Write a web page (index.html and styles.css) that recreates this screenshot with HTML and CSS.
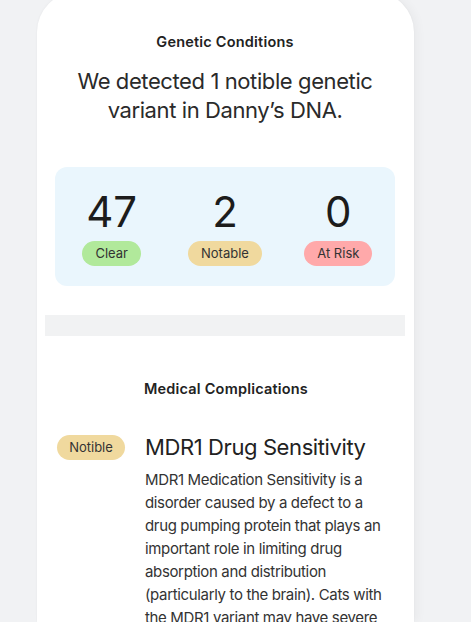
FILE: index.html
```html
<!DOCTYPE html>
<html lang="en">
<head>
    <meta charset="UTF-8">
    <meta name="viewport" content="width=device-width, initial-scale=1.0">
    <title>Genetic Conditions - Danny</title>
    <link rel="stylesheet" href="styles.css">
</head>
<body>
    <div class="card">
        <section class="summary">
            <h2 class="section-title">Genetic Conditions</h2>
            <p class="headline">We detected 1 notible genetic variant in Danny’s DNA.</p>

            <div class="stats">
                <div class="stat">
                    <span class="stat-num">47</span>
                    <span class="pill pill-clear">Clear</span>
                </div>
                <div class="stat">
                    <span class="stat-num">2</span>
                    <span class="pill pill-notable">Notable</span>
                </div>
                <div class="stat">
                    <span class="stat-num">0</span>
                    <span class="pill pill-risk">At Risk</span>
                </div>
            </div>
        </section>

        <div class="divider"></div>

        <section class="complications">
            <h2 class="section-title">Medical Complications</h2>

            <div class="condition">
                <div class="condition-tag">
                    <span class="pill pill-notable pill-tag">Notible</span>
                </div>
                <div class="condition-body">
                    <h3 class="condition-name">MDR1 Drug Sensitivity</h3>
                    <p class="condition-text">MDR1 Medication Sensitivity is a disorder caused by a defect to a drug pumping protein that plays an important role in limiting drug absorption and distribution (particularly to the brain). Cats with the MDR1 variant may have severe</p>
                </div>
            </div>
        </section>
    </div>
    <div class="bottom-strip"></div>
</body>
</html>
```

FILE: styles.css
```css
html, body {
    height: 632px;
}

body {
    font-family: Inter, "Liberation Sans", sans-serif;
    background-color: #f1f2f4;
    color: #222;
    margin: 0;
    padding: 0;
    overflow: hidden;
    display: flex;
    flex-direction: column;
}

.card {
    flex: 0 0 630px;
    margin-top: -8px;
    margin-left: 37px;
    width: 377px;
    background-color: #fff;
    border-radius: 40px 40px 0 0;
    box-shadow: 4px 0 10px rgba(0, 0, 0, 0.035), 0 0 2px rgba(0, 0, 0, 0.05);
    overflow: hidden;
}

.bottom-strip {
    flex: 0 0 10px;
    background-color: #fff;
    position: relative;
    z-index: 1;
}

.summary {
    padding: 40px 19px 0 18px;
}

.section-title {
    margin: 0;
    font-size: 14.5px;
    line-height: 20px;
    font-weight: 600;
    letter-spacing: 0.2px;
    text-align: center;
    color: #222;
}

.headline {
    margin: 15px 0 0;
    font-size: 22px;
    line-height: 29px;
    font-weight: 400;
    letter-spacing: -0.4px;
    text-align: center;
    color: #2a2a2a;
}

.stats {
    margin-top: 42px;
    background-color: #eaf6fd;
    border-radius: 12px;
    padding: 21px 0 20px;
    display: grid;
    grid-template-columns: repeat(3, 1fr);
}

.stat {
    display: flex;
    flex-direction: column;
    align-items: center;
    gap: 5px;
}

.stat-num {
    font-size: 42px;
    line-height: 48px;
    font-weight: 400;
    color: #1c1c1c;
}

.pill {
    display: inline-block;
    height: 25px;
    line-height: 25px;
    padding: 0 13px;
    border-radius: 13px;
    font-size: 13px;
    color: #333;
}

.pill-clear {
    background-color: #b1e99b;
}

.pill-notable {
    background-color: #f0d99e;
}

.pill-risk {
    background-color: #ffa9aa;
}

.divider {
    height: 21px;
    margin: 29px 9px 0 8px;
    background-color: #f1f2f3;
}

.complications {
    padding: 43px 19px 0 20px;
}

.condition {
    margin-top: 34px;
    display: flex;
    gap: 20px;
}

.condition-tag {
    flex: 0 0 68px;
    padding-top: 2px;
}

.pill-tag {
    width: 68px;
    padding: 0;
    text-align: center;
}

.condition-body {
    flex: 1;
    padding-right: 6px;
}

.condition-name {
    margin: 0;
    font-size: 22px;
    line-height: 28px;
    font-weight: 400;
    letter-spacing: -0.4px;
    color: #222;
}

.condition-text {
    margin: 7px 0 0;
    font-size: 15px;
    line-height: 23px;
    letter-spacing: -0.35px;
    color: #333;
}
```
